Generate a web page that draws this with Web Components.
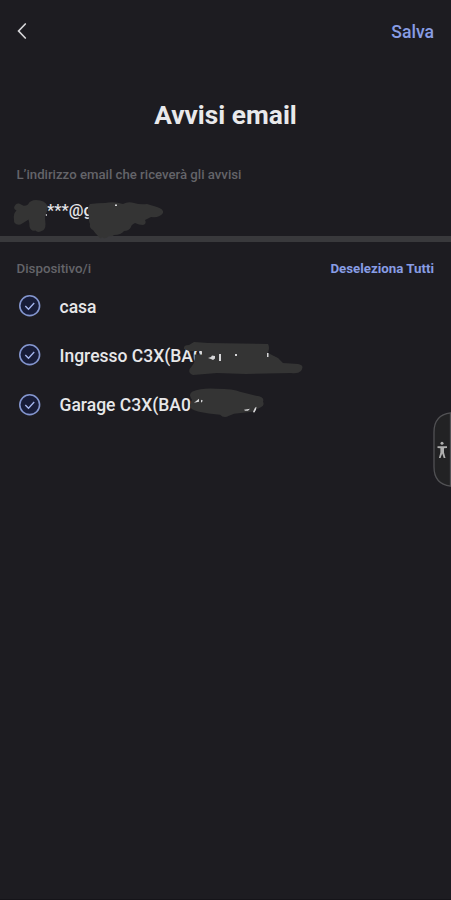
<!DOCTYPE html>
<html lang="it"><head><meta charset="utf-8"><title>Avvisi email</title>
<style>html,body{margin:0;background:#1d1c21}</style></head><body>
<alert-screen></alert-screen>
<script>
const define = (name, html) => customElements.define(name, class extends HTMLElement {
  constructor() {
    super();
    const t = document.createElement('template');
    t.innerHTML = html;
    this.attachShadow({mode: 'open'}).append(t.content.cloneNode(true));
  }
});

define('nav-bar', `<style>
:host{display:flex;height:63px;padding:0 17px 0 16px;align-items:center;justify-content:space-between;box-sizing:border-box}
svg{display:block;margin-top:-2px}
span{color:#889de4;font-size:17.6px;font-weight:500;line-height:22px}
</style><svg width="12" height="18" viewBox="0 0 12 18"><path d="M9.3 2 2.6 9l6.7 7" fill="none" stroke="#d6d6d8" stroke-width="1.7" stroke-linecap="round"/></svg><span><slot></slot></span>`);

define('page-title', `<style>
:host{display:block;height:104px;padding-top:36px;box-sizing:border-box;text-align:center;font-size:26.3px;font-weight:700;line-height:32px;color:#e9e9eb}
</style><slot></slot>`);

define('email-field', `<style>
:host{display:flex;flex-direction:column;height:69px;position:relative;border-bottom:6px solid #39393c}
.label{color:#646469;font-size:13.2px;font-weight:500;line-height:16px;padding-left:16.5px}
.value{color:#e5e5e8;font-size:16.4px;font-weight:500;line-height:20px;padding-left:47px;margin-top:18px}
svg{position:absolute;left:0;top:33px;overflow:visible}
</style><div class="label"><slot name="label"></slot></div><div class="value"><slot></slot></div>
<svg width="170" height="40" viewBox="0 200 170 40">
<path d="M14 208q1-5 5-4.500l4 2q2 1 5-1 2-4.500 8-4.500 9 0 11.500 6 .5 5-2.500 10 0 4 .5 8 0 6-4 7-4 2-6-.5-5 1-6-4 0-4-1-7-3 2-8 5-7 1-6.500-5-1-6 2.500-9-2.500-1-2.500-3Z" fill="#343434"/>
<path d="M90 204q8-1 15-1 9-2 18 1 5-3 11-1 6 2 13 1l10 3q7 2 6 6-3 5-12 4l-6 3q2 4-2 5-4 0-8-2-4 2-4 4-2 4-7 4-3 4-10 4-2 2-5 1-4 4-7 1-1 3-4-1-3-3-5-6-4-2-3-6-2-5-1-8-3-7 1-12Z" fill="#343434"/>
<path d="M115 204.500h2v1.500h-2z" fill="#d8d8da"/><path d="M45.800 214h1.200v2h-1.200z" fill="#a9a9ad"/></svg>`);

define('list-header', `<style>
:host{display:flex;height:39px;padding:18px 17px 0 16.5px;box-sizing:border-box;justify-content:space-between;line-height:17px;font-size:13.3px;font-weight:500;color:#646469}
b{font-size:13.3px;font-weight:700;color:#889de4}
</style><slot></slot><b><slot name="action"></slot></b>`);

define('device-row', `<style>
:host{display:flex;height:49.3px;align-items:center;padding-left:18px;position:relative;color:#e7e7e9;font-size:17.5px;font-weight:500;line-height:22px}
.check{display:block;width:24px;height:24px;margin:1px 17.5px 0 0}
.text{margin-top:2px;white-space:pre}
::slotted(svg){position:absolute;left:0;top:0;overflow:visible}
</style><svg class="check" viewBox="0 0 24 24"><circle cx="11.7" cy="11.7" r="9.9" fill="#171c38" stroke="#8496cf" stroke-width="1.6"/><path d="m7.3 12 3.2 3.2 5.7-6.1" fill="none" stroke="#a4b5ed" stroke-width="1.4"/></svg><span class="text"><slot></slot></span><slot name="cover"></slot>`);

define('access-tab', `<style>
:host{position:absolute;right:0;top:412px;width:18px;height:75px}svg{display:block}
</style><svg width="18" height="75" viewBox="0 0 18 75"><path d="M17.500.8Q1 3 1 20v35q0 17 16.500 19.200Z" fill="#222224" stroke="#515154" stroke-width="1.3"/><circle cx="9" cy="31.300" r="1.500" fill="#b0b0b0"/><path d="M4.500 34.200h9.500v1.700l-3 .4v4.200l1.500 5.500h-1.800L9.200 41.500 7.600 46H5.900l1.500-5.500v-4.200l-2.900-.4Z" fill="#b0b0b0"/></svg>`);

define('alert-screen', `<style>
:host{display:block;position:relative;width:451px;height:900px;overflow:hidden;background:#1d1c21;font-family:Roboto,"Liberation Sans",sans-serif;box-shadow:inset 0 -1px #151419}
</style>
<nav-bar>Salva</nav-bar>
<page-title>Avvisi email</page-title>
<email-field><span slot="label">L’indirizzo email che riceverà gli avvisi</span>***@g</email-field>
<list-header>Dispositivo/i<span slot="action">Deseleziona Tutti</span></list-header>
<device-row>casa</device-row>
<device-row>Ingresso C3X(BA0<svg slot="cover" width="310" height="49" viewBox="0 331 310 49"><path d="M184 350q-1-4 5-4l5-3 14 1 60 1q2 3 0 9l4 2 6 3 5 5 15 1q7 1 3 7-3 3-10 2l-45 1-29-1-24 2q-7-3-1-9l3-5q-1-4 8-5l-2-5-12 0Z" fill="#343434"/><path d="M194.500 355.500h9v8h-9z" fill="#343434"/><path d="m199 353 3-1v3h-2Zm9 6 3-1 1-1.500 3 .5v2.500l-2 1.500-2-1Zm11-4h2v7h-2Zm16 0h2v2h-2Zm32-1h1.500v4H267z" fill="#d5d5d7"/></svg></device-row>
<device-row>Garage C3X(BA0<svg slot="cover" width="270" height="49" viewBox="0 380.300 270 49"><path d="M192 400q-4-5 0-8 10-4 24-3 18 0 24 3l16 4q9 1 7 6 2 4-3 6l-8 4-18 2-5 2q-5 3-9-1-12-1-21-3-10-2-9-7 1-3 2-5Z" fill="#343434"/><path d="m194 403 5-4v3Zm7-3 2 1-2 2Zm43 10 6-1-2 2h-3Zm9 2 2-4 1.500-1q0 4-2.500 6Z" fill="#d5d5d7"/></svg></device-row>
<access-tab></access-tab>`);
</script></body></html>
